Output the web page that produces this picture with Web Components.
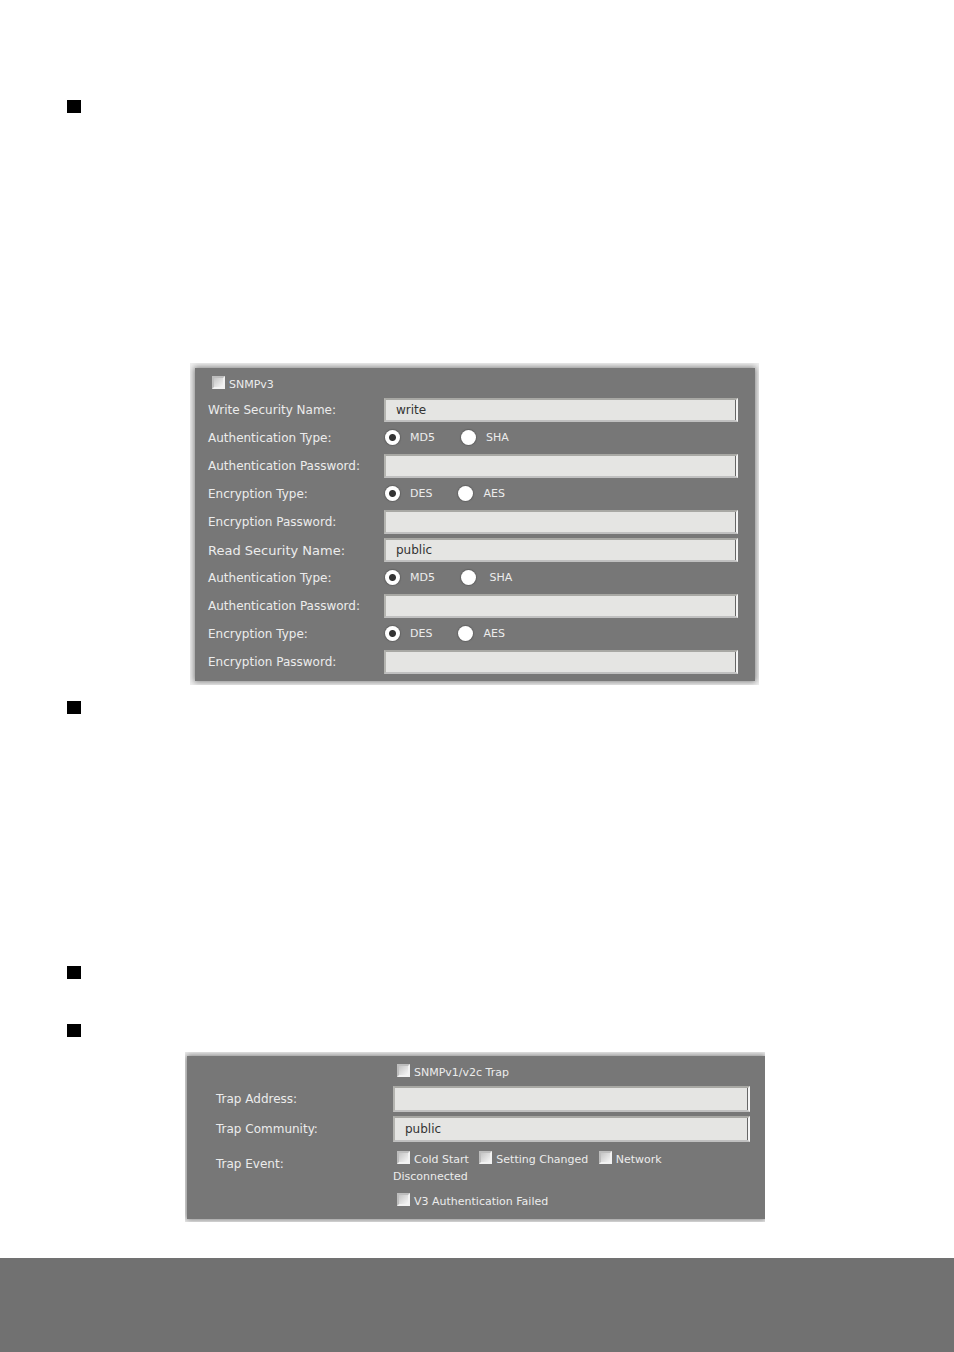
<!DOCTYPE html>
<html lang="en">

<head>
    <meta charset="utf-8">
    <title>SNMP settings</title>
    <style>
        body {
            margin: 0;
            background: #fff;
            font-family: "DejaVu Sans", Verdana, sans-serif;
        }
    </style>
    <script>
        class ManualPage extends HTMLElement {
            constructor() {
                super();
                this.attachShadow({ mode: 'open' });
                this.shadowRoot.innerHTML = `
                    <style>
                        :host {
                            display: flex;
                            flex-direction: column;
                            min-height: 100vh;
                        }
                        main {
                            flex: 1;
                            padding-top: 100px;
                        }
                        footer {
                            height: 94px;
                            background: #717171;
                        }
                    </style>
                    <main><slot></slot></main>
                    <footer></footer>
                `;
            }
        }

        // A bulleted section; the size attribute sets the room under the bullet
        class ManualSection extends HTMLElement {
            constructor() {
                super();
                this.attachShadow({ mode: 'open' });
                this.shadowRoot.innerHTML = `
                    <style>
                        :host {
                            display: flex;
                            flex-direction: column;
                            padding-bottom: 16px;
                        }
                        .bullet {
                            width: 14px;
                            height: 13px;
                            margin: 0 0 15px 67px;
                            background: #000;
                        }
                        :host([size="small"]) .bullet { margin-bottom: 29px; }
                        :host([size="large"]) .bullet { margin-bottom: 236px; }
                        :host([size="full"]) .bullet { margin-bottom: 250px; }
                    </style>
                    <div class="bullet"></div>
                    <slot></slot>
                `;
            }
        }

        class SettingsPanel extends HTMLElement {
            constructor() {
                super();
                this.attachShadow({ mode: 'open' });
                this.shadowRoot.innerHTML = `
                    <style>
                        :host {
                            --label-width: 176px;
                            --row-height: 28px;
                            --field-height: 24px;
                            display: block;
                            margin: 0 195px 0 190px;
                            padding: 5px 4px 4px 5px;
                            overflow: hidden;
                            background: #f0f0f0;
                        }
                        form {
                            display: flex;
                            flex-direction: column;
                            padding: 0 17px 5px 13px;
                            background: #777;
                            box-shadow: 0 0 6px 1px #808080;
                            color: #ececec;
                        }
                        :host([wide]) {
                            --label-width: 177px;
                            --row-height: 30px;
                            --field-height: 26px;
                            margin: 0 189px 0 185px;
                            padding: 4px 0 3px 2px;
                        }
                        :host([wide]) form {
                            padding: 0 15px 6px 29px;
                        }
                    </style>
                    <form><slot></slot></form>
                `;
            }
        }

        class TextField extends HTMLElement {
            constructor() {
                super();
                this.attachShadow({ mode: 'open' });
                this.shadowRoot.innerHTML = `
                    <style>
                        :host {
                            display: flex;
                            align-items: center;
                            height: var(--row-height);
                            font-size: 12px;
                        }
                        :host([large]) { font-size: 13px; }
                        label { width: var(--label-width); }
                        input {
                            flex: 1;
                            min-width: 0;
                            height: var(--field-height);
                            box-sizing: border-box;
                            margin: 0;
                            padding: 0 10px;
                            border: 2px solid;
                            border-color: #a8a8a4 #f4f4f4 #c0c0c0 #b4b4b0;
                            border-radius: 0;
                            outline: none;
                            background: #e5e5e3;
                            box-shadow: inset -1px 0 #666;
                            color: #333;
                            font: 12px "DejaVu Sans", Verdana, sans-serif;
                        }
                    </style>
                    <label for="field"></label>
                    <input type="text" id="field">
                `;
            }

            connectedCallback() {
                this.shadowRoot.querySelector('label').textContent = this.getAttribute('label');
                this.shadowRoot.querySelector('input').value = this.getAttribute('value') || '';
            }
        }

        class RadioField extends HTMLElement {
            constructor() {
                super();
                this.attachShadow({ mode: 'open' });
                this.shadowRoot.innerHTML = `
                    <style>
                        :host {
                            display: flex;
                            align-items: center;
                            height: var(--row-height);
                            font-size: 12px;
                        }
                        .name { width: var(--label-width); }
                        .options {
                            display: flex;
                            gap: 26px;
                            padding: 0 0 2px 1px;
                            font-size: 11px;
                        }
                        label {
                            display: flex;
                            align-items: center;
                            gap: 10px;
                        }
                        input {
                            appearance: none;
                            width: 15px;
                            height: 15px;
                            margin: 0;
                            border-radius: 50%;
                            background: #fff;
                            box-shadow: 0 0 1px 1px #636363;
                        }
                        input:checked {
                            background: radial-gradient(circle, #333 3px, #fff 4px);
                        }
                    </style>
                    <span class="name" id="name"></span>
                    <div class="options" role="radiogroup" aria-labelledby="name"></div>
                `;
            }

            connectedCallback() {
                this.shadowRoot.querySelector('.name').textContent = this.getAttribute('label');
                const options = this.shadowRoot.querySelector('.options');
                options.textContent = '';
                this.getAttribute('options').split(',').forEach((text, index) => {
                    const label = document.createElement('label');
                    const input = document.createElement('input');
                    input.type = 'radio';
                    input.name = 'option';
                    input.checked = index === 0;
                    const caption = document.createElement('span');
                    caption.textContent = text;
                    label.append(input, caption);
                    options.append(label);
                });
            }
        }

        class CheckOption extends HTMLElement {
            constructor() {
                super();
                this.attachShadow({ mode: 'open' });
                this.shadowRoot.innerHTML = `
                    <style>
                        :host {
                            display: inline;
                            margin-right: 3px;
                            font-size: 11px;
                            line-height: 17px;
                        }
                        input {
                            appearance: none;
                            width: 13px;
                            height: 13px;
                            box-sizing: border-box;
                            margin: 0 4px;
                            border: 2px solid;
                            border-color: #bdbdbd #f2f2f2 #f2f2f2 #bdbdbd;
                            background: linear-gradient(135deg, #c4c4c4, #f6f6f6);
                            vertical-align: -1px;
                        }
                    </style>
                    <label><input type="checkbox"><slot></slot></label>
                `;
            }
        }

        class CheckRow extends HTMLElement {
            constructor() {
                super();
                this.attachShadow({ mode: 'open' });
                this.shadowRoot.innerHTML = `
                    <style>
                        :host {
                            display: flex;
                            align-items: center;
                            min-height: 28px;
                            font-size: 12px;
                            line-height: 17px;
                        }
                        .name { width: var(--label-width); }
                        .options {
                            padding-top: 4px;
                            font-size: 11px;
                        }
                        :host([flush]) .name { display: none; }
                        :host([tall]) { min-height: 41px; }
                        :host([tall]) .options { padding-top: 6px; }
                    </style>
                    <span class="name"></span>
                    <div class="options"><slot></slot></div>
                `;
            }

            connectedCallback() {
                this.shadowRoot.querySelector('.name').textContent = this.getAttribute('label') || '';
            }
        }

        customElements.define('manual-page', ManualPage);
        customElements.define('manual-section', ManualSection);
        customElements.define('settings-panel', SettingsPanel);
        customElements.define('text-field', TextField);
        customElements.define('radio-field', RadioField);
        customElements.define('check-option', CheckOption);
        customElements.define('check-row', CheckRow);
    </script>
</head>

<body>
    <manual-page>
        <manual-section size="full">
            <settings-panel>
                <check-row flush><check-option>SNMPv3</check-option></check-row>
                <text-field label="Write Security Name:" value="write"></text-field>
                <radio-field label="Authentication Type:" options="MD5,SHA"></radio-field>
                <text-field label="Authentication Password:"></text-field>
                <radio-field label="Encryption Type:" options="DES,AES"></radio-field>
                <text-field label="Encryption Password:"></text-field>
                <text-field large label="Read Security Name:" value="public"></text-field>
                <radio-field label="Authentication Type:" options="MD5,&nbsp;SHA"></radio-field>
                <text-field label="Authentication Password:"></text-field>
                <radio-field label="Encryption Type:" options="DES,AES"></radio-field>
                <text-field label="Encryption Password:"></text-field>
            </settings-panel>
        </manual-section>
        <manual-section size="large"></manual-section>
        <manual-section size="small"></manual-section>
        <manual-section>
            <settings-panel wide>
                <check-row><check-option>SNMPv1/v2c Trap</check-option></check-row>
                <text-field label="Trap Address:"></text-field>
                <text-field label="Trap Community:" value="public"></text-field>
                <check-row tall label="Trap Event:">
                    <check-option>Cold Start</check-option>
                    <check-option>Setting Changed</check-option>
                    <check-option>Network<br>Disconnected</check-option>
                </check-row>
                <check-row><check-option>V3 Authentication Failed</check-option></check-row>
            </settings-panel>
        </manual-section>
    </manual-page>
</body>

</html>
